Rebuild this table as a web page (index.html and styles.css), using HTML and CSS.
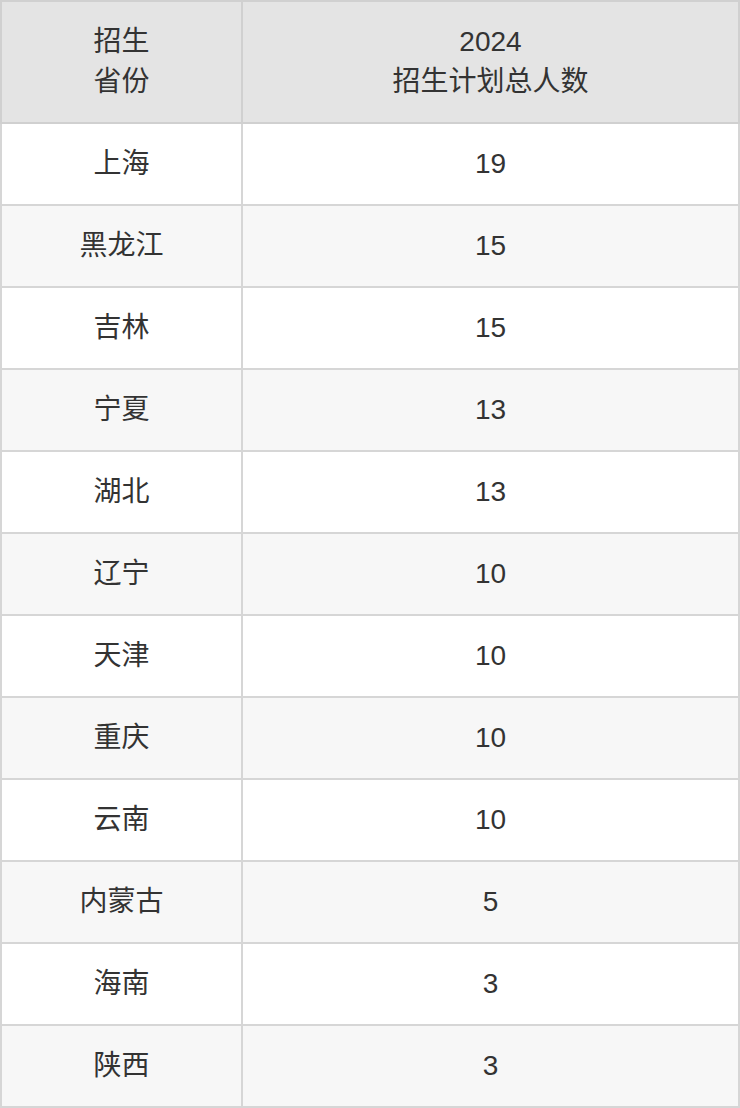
FILE: index.html
```html
<!DOCTYPE html>
<html lang="zh-CN">
<head>
<meta charset="utf-8">
<title>招生计划</title>
<link rel="stylesheet" href="styles.css">
</head>
<body>
<table class="plan">
  <thead>
    <tr><th class="c1">招生<br>省份</th><th class="c2">2024<br>招生计划总人数</th></tr>
  </thead>
  <tbody>
    <tr><td>上海</td><td>19</td></tr>
    <tr><td>黑龙江</td><td>15</td></tr>
    <tr><td>吉林</td><td>15</td></tr>
    <tr><td>宁夏</td><td>13</td></tr>
    <tr><td>湖北</td><td>13</td></tr>
    <tr><td>辽宁</td><td>10</td></tr>
    <tr><td>天津</td><td>10</td></tr>
    <tr><td>重庆</td><td>10</td></tr>
    <tr><td>云南</td><td>10</td></tr>
    <tr><td>内蒙古</td><td>5</td></tr>
    <tr><td>海南</td><td>3</td></tr>
    <tr><td>陕西</td><td>3</td></tr>
  </tbody>
</table>
</body>
</html>
```
FILE: styles.css
```css
html, body {
  margin: 0;
  padding: 0;
  background: #ffffff;
}
.plan {
  width: 740px;
  border-collapse: collapse;
  table-layout: fixed;
  font-family: "Liberation Sans", "Noto Sans CJK SC", sans-serif;
  font-size: 28px;
  color: #333333;
}
.plan th, .plan td {
  border: 2px solid #d6d6d6;
  text-align: center;
  vertical-align: middle;
  padding: 0;
  font-weight: normal;
}
.plan th {
  height: 120px;
  line-height: 40px;
  background: #e4e4e4;
  border-color: #d0d0d0;
}
.plan .c1 {
  width: 239px;
}
.plan td {
  height: 80px;
  line-height: 40px;
}
.plan tbody tr:nth-child(even) td {
  background: #f7f7f7;
}
```
